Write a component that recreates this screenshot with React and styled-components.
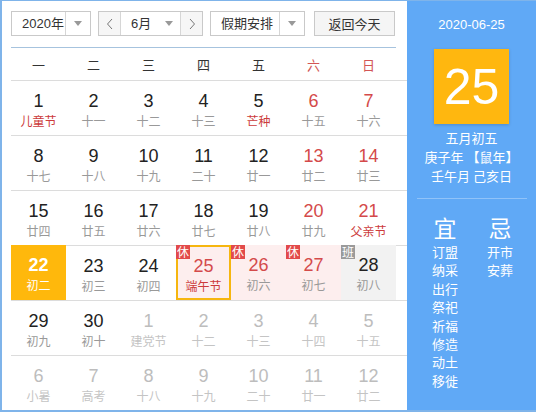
import React from "react";
import styled, { createGlobalStyle } from "styled-components";

const GlobalStyle = createGlobalStyle`
  html, body {
    margin: 0;
    padding: 0;
    background: #fff;
  }
  body {
    font-family: "Liberation Sans", "Noto Sans CJK SC", sans-serif;
  }
`;

const Frame = styled.div`
  width: 536px;
  height: 412px;
  box-sizing: border-box;
  border-left: 2px solid #7fb4ea;
  border-top: 1px solid #7fb4ea;
  border-bottom: 2px solid #7fb4ea;
  display: flex;
  overflow: hidden;
`;

const Main = styled.div`
  width: 405px;
  box-sizing: border-box;
  padding: 10px 0 0 9px;
  background: #fff;
`;

const Toolbar = styled.div`
  display: flex;
  align-items: center;
  height: 25px;
  width: 385px;
`;

const SelectBox = styled.div`
  display: flex;
  width: ${(p) => p.$width}px;
  height: 25px;
  box-sizing: border-box;
  border: 1px solid #c9c9c9;
  margin-right: ${(p) => p.$gap || 0}px;
  background: #fff;
  font-size: 13px;
  color: #333;
`;

const SelectLabel = styled.div`
  flex: 1;
  display: flex;
  align-items: center;
  padding-left: ${(p) => p.$pad}px;
  line-height: 23px;
`;

const SelectArrow = styled.div`
  width: ${(p) => p.$width || 24}px;
  display: flex;
  align-items: center;
  justify-content: center;
  border-left: ${(p) => (p.$divider ? "1px solid #d6d6d6" : "none")};

  &::after {
    content: "";
    border-left: 4px solid transparent;
    border-right: 4px solid transparent;
    border-top: 5px solid #999;
  }
`;

const NavButton = styled.div`
  width: 21px;
  display: flex;
  align-items: center;
  justify-content: center;
  background: #f6f6f6;
  border-left: ${(p) => (p.$side === "right" ? "1px solid #d6d6d6" : "none")};
  border-right: ${(p) => (p.$side === "left" ? "1px solid #d6d6d6" : "none")};
`;

const TodayButton = styled.div`
  width: 81px;
  height: 25px;
  box-sizing: border-box;
  border: 1px solid #c9c9c9;
  background: #f5f5f5;
  font-size: 13px;
  color: #333;
  display: flex;
  align-items: center;
  justify-content: center;
`;

const Divider = styled.div`
  width: 385px;
  height: 1px;
  margin-top: 11px;
  background: #a6c3de;
`;

const Weekdays = styled.div`
  display: grid;
  grid-template-columns: repeat(7, 55px);
  height: 32px;
  align-items: center;
`;

const WeekdayName = styled.div`
  text-align: center;
  font-size: 13px;
  color: ${(p) => (p.$weekend ? "#d25555" : "#333")};
`;

const Week = styled.div`
  display: grid;
  grid-template-columns: repeat(7, 55px);
  height: 55px;
  box-sizing: border-box;
  border-top: 1px solid #dcdcdc;
`;

const cellBg = {
  selected: "#ffb80c",
  today: "#fdeeee",
  rest: "#fdeeee",
  work: "#f2f2f2",
};

const Cell = styled.div`
  position: relative;
  box-sizing: border-box;
  margin-top: ${(p) => (p.$kind ? "-1px" : "0")};
  height: ${(p) => (p.$kind ? "55px" : "54px")};
  padding-top: ${(p) => (p.$kind === "today" ? "8px" : "9px")};
  text-align: center;
  background: ${(p) => cellBg[p.$kind] || "transparent"};
  border: ${(p) => (p.$kind === "today" ? "2px solid #f6b60f" : "none")};
`;

const DayNum = styled.div`
  font-size: 18px;
  line-height: 22px;
  color: ${(p) => p.$color};
  font-weight: ${(p) => (p.$bold ? "bold" : "normal")};
`;

const Lunar = styled.div`
  font-family: "Noto Sans CJK SC", sans-serif;
  font-size: 12px;
  line-height: 18px;
  color: ${(p) => p.$color};
`;

const Badge = styled.span`
  position: absolute;
  top: ${(p) => (p.$inset ? "-2px" : "0")};
  left: ${(p) => (p.$inset ? "-2px" : "0")};
  width: 14px;
  height: 14px;
  line-height: 14px;
  font-family: "Noto Sans CJK SC", sans-serif;
  font-size: 12px;
  color: #fff;
  text-align: center;
  background: ${(p) => (p.$work ? "#9a9a9a" : "#e24a4a")};
`;

const Side = styled.div`
  flex: 1;
  background: #60a9f6;
  color: #fff;
  display: flex;
  flex-direction: column;
  align-items: center;
  padding-top: 16px;
  font-family: "Noto Sans CJK SC", sans-serif;
`;

const SideDate = styled.div`
  font-family: "Liberation Sans", sans-serif;
  font-size: 13px;
  line-height: 16px;
`;

const BigDay = styled.div`
  width: 75px;
  height: 75px;
  margin-top: 16px;
  background: #ffb70f;
  box-shadow: 0 1px 3px rgba(0, 0, 0, 0.18);
  display: flex;
  align-items: center;
  justify-content: center;
  font-family: "Liberation Sans", sans-serif;
  font-size: 50px;
  color: #fff;
`;

const LunarInfo = styled.div`
  margin-top: 4px;
  font-size: 13px;
  line-height: 19px;
  text-align: center;
`;

const SideRule = styled.div`
  width: 110px;
  height: 1px;
  margin-top: 13px;
  background: rgba(255, 255, 255, 0.3);
`;

const Almanac = styled.div`
  display: flex;
  gap: 29px;
  margin-top: 14px;
  padding-left: 2px;
`;

const AlmanacCol = styled.div`
  width: 26px;
  display: flex;
  flex-direction: column;
  align-items: center;
`;

const AlmanacTitle = styled.div`
  font-size: 23px;
  line-height: 28px;
  margin-bottom: 2px;
`;

const AlmanacItem = styled.div`
  font-size: 13px;
  line-height: 18.4px;
  white-space: nowrap;
`;

const Chevron = ({ dir }) => (
  <svg width="8" height="12" viewBox="0 0 8 12">
    <polyline
      points={dir === "left" ? "6,1 1.5,6 6,11" : "2,1 6.5,6 2,11"}
      fill="none"
      stroke="#777"
      strokeWidth="1"
    />
  </svg>
);

const RED = "#d44a4a";
const BLACK = "#222";
const GRAY = "#999";
const FADE_NUM = "#bdbdbd";
const FADE_LUNAR = "#c4c4c4";

// [day, lunar, festival?, otherMonth?, kind?, badge?]
const weeks = [
  [[1, "儿童节", true], [2, "十一"], [3, "十二"], [4, "十三"], [5, "芒种", true], [6, "十五"], [7, "十六"]],
  [[8, "十七"], [9, "十八"], [10, "十九"], [11, "二十"], [12, "廿一"], [13, "廿二"], [14, "廿三"]],
  [[15, "廿四"], [16, "廿五"], [17, "廿六"], [18, "廿七"], [19, "廿八"], [20, "廿九"], [21, "父亲节", true]],
  [
    [22, "初二", false, false, "selected"],
    [23, "初三"],
    [24, "初四"],
    [25, "端午节", true, false, "today", "休"],
    [26, "初六", false, false, "rest", "休"],
    [27, "初七", false, false, "rest", "休"],
    [28, "初八", false, false, "work", "班"],
  ],
  [[29, "初九"], [30, "初十"], [1, "建党节", true, true], [2, "十二", false, true], [3, "十三", false, true], [4, "十四", false, true], [5, "十五", false, true]],
  [[6, "小暑", false, true], [7, "高考", false, true], [8, "十八", false, true], [9, "十九", false, true], [10, "二十", false, true], [11, "廿一", false, true], [12, "廿二", false, true]],
];

const weekdayNames = ["一", "二", "三", "四", "五", "六", "日"];
const good = ["订盟", "纳采", "出行", "祭祀", "祈福", "修造", "动土", "移徙"];
const bad = ["开市", "安葬"];

function DayCell({ data, col }) {
  const [day, lunar, festival, other, kind, badge] = data;
  let numColor = col >= 5 || kind === "today" || kind === "rest" ? RED : BLACK;
  if (kind === "work") numColor = BLACK;
  let lunarColor = festival ? "#cc3b3b" : GRAY;
  if (other) {
    numColor = FADE_NUM;
    lunarColor = FADE_LUNAR;
  }
  if (kind === "selected") {
    numColor = "#fff";
    lunarColor = "#fff";
  }
  return (
    <Cell $kind={kind}>
      {badge && (
        <Badge $work={kind === "work"} $inset={kind === "today"}>
          {badge}
        </Badge>
      )}
      <DayNum $color={numColor} $bold={kind === "selected"}>
        {day}
      </DayNum>
      <Lunar $color={lunarColor}>{lunar}</Lunar>
    </Cell>
  );
}

export default function App() {
  return (
    <>
      <GlobalStyle />
      <Frame>
        <Main>
          <Toolbar>
            <SelectBox $width={80} $gap={7}>
              <SelectLabel $pad={10}>2020年</SelectLabel>
              <SelectArrow $divider />
            </SelectBox>
            <SelectBox $width={105} $gap={7}>
              <NavButton $side="left">
                <Chevron dir="left" />
              </NavButton>
              <SelectLabel $pad={10}>6月</SelectLabel>
              <SelectArrow $width={22} />
              <NavButton $side="right">
                <Chevron dir="right" />
              </NavButton>
            </SelectBox>
            <SelectBox $width={95} $gap={9}>
              <SelectLabel $pad={10}>假期安排</SelectLabel>
              <SelectArrow $divider />
            </SelectBox>
            <TodayButton>返回今天</TodayButton>
          </Toolbar>
          <Divider />
          <Weekdays>
            {weekdayNames.map((n, i) => (
              <WeekdayName key={n} $weekend={i >= 5}>
                {n}
              </WeekdayName>
            ))}
          </Weekdays>
          {weeks.map((week, wi) => (
            <Week key={wi}>
              {week.map((d, ci) => (
                <DayCell key={ci} data={d} col={ci} />
              ))}
            </Week>
          ))}
        </Main>
        <Side>
          <SideDate>2020-06-25</SideDate>
          <BigDay>25</BigDay>
          <LunarInfo>
            <div>五月初五</div>
            <div>庚子年 【鼠年】</div>
            <div>壬午月 己亥日</div>
          </LunarInfo>
          <SideRule />
          <Almanac>
            <AlmanacCol>
              <AlmanacTitle>宜</AlmanacTitle>
              {good.map((g) => (
                <AlmanacItem key={g}>{g}</AlmanacItem>
              ))}
            </AlmanacCol>
            <AlmanacCol>
              <AlmanacTitle>忌</AlmanacTitle>
              {bad.map((b) => (
                <AlmanacItem key={b}>{b}</AlmanacItem>
              ))}
            </AlmanacCol>
          </Almanac>
        </Side>
      </Frame>
    </>
  );
}
